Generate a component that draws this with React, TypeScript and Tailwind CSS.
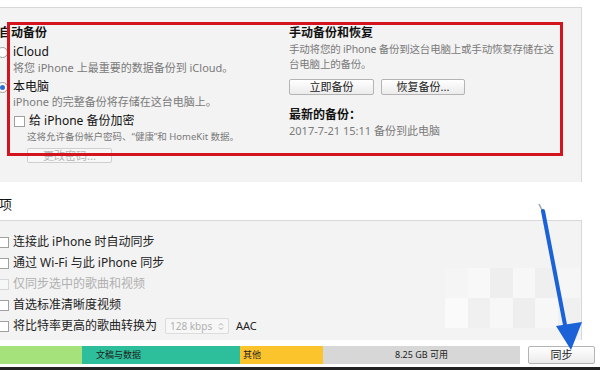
import React from 'react'

const font = { fontFamily: '"Noto Sans", "Noto Sans CJK SC", sans-serif' }

const Radio = ({ checked }: { checked?: boolean }) => (
    <span className="w-[11px] h-[11px] rounded-full border border-[#9a9a9a] bg-white flex items-center justify-center shrink-0">
        {checked && <span className="w-[5px] h-[5px] rounded-full bg-[#2b6fd6]" />}
    </span>
)

const Check = ({ disabled }: { disabled?: boolean }) => (
    <span className={`w-[11px] h-[11px] border shrink-0 ${disabled ? 'border-[#d6d6d6] bg-[#f7f7f7]' : 'border-[#a0a0a0] bg-white'}`} />
)

const Btn = ({ label, w }: { label: string; w: string }) => (
    <div className={`${w} h-[16px] border border-[#b4b4b4] rounded-[2px] bg-gradient-to-b from-white to-[#ebebeb] text-[11px] leading-[14px] text-[#222] flex items-center justify-center`}>
        {label}
    </div>
)

const OptionRow = ({ label, disabled, children }: { label: string; disabled?: boolean; children?: React.ReactNode }) => (
    <div className="h-[16px] flex items-center gap-[4px] whitespace-nowrap">
        <Check disabled={disabled} />
        <span className={`text-[12px] leading-[16px] ${disabled ? 'text-[#b0b0b0]' : 'text-[#222]'}`}>{label}</span>
        {children}
    </div>
)

export default function App() {
    return (
        <div className="w-[600px] h-[370px] bg-white relative overflow-hidden" style={font}>
            <div className="h-[7px]" />

            {/* backup panel */}
            <div className="h-[175px] w-[582px] bg-[#f3f3f3] border-t border-r border-[#d8d8d8] flex pt-[17px]">
                <div className="w-[290px] ml-[-1px] flex flex-col whitespace-nowrap">
                    <div className="h-[16px] text-[12px] leading-[16px] font-bold text-[#111]">自动备份</div>
                    <div className="h-[16px] mt-[3px] ml-[-2px] flex items-center gap-[5px]">
                        <Radio />
                        <span className="text-[12px] leading-[16px] text-[#111]">iCloud</span>
                    </div>
                    <div className="h-[14px] mt-[1px] ml-[14px] text-[11px] leading-[14px] text-[#7a7a7a]">将您 iPhone 上最重要的数据备份到 iCloud。</div>
                    <div className="h-[16px] mt-[4px] ml-[-2px] flex items-center gap-[5px]">
                        <Radio checked />
                        <span className="text-[12px] leading-[16px] text-[#111]">本电脑</span>
                    </div>
                    <div className="h-[14px] ml-[14px] text-[11px] leading-[14px] text-[#7a7a7a]">iPhone 的完整备份将存储在这台电脑上。</div>
                    <div className="h-[16px] mt-[4px] ml-[15px] flex items-center gap-[4px]">
                        <Check />
                        <span className="text-[12px] leading-[16px] text-[#111]">给 iPhone 备份加密</span>
                    </div>
                    <div className="h-[12px] mt-[2px] ml-[28px] text-[9.5px] leading-[12px] text-[#7a7a7a]">这将允许备份帐户密码、“健康”和 HomeKit 数据。</div>
                    <div className="mt-[5px] ml-[28px] w-[85px] h-[15px] border border-[#cfcfcf] rounded-[2px] bg-[#f7f7f7] text-[11px] leading-[13px] text-[#b5b5b5] text-center">更改密码...</div>
                </div>
                <div className="flex flex-col whitespace-nowrap">
                    <div className="h-[16px] text-[12px] leading-[16px] font-bold text-[#111]">手动备份和恢复</div>
                    <div className="text-[10.5px] leading-[15px] text-[#7a7a7a] mt-[1px] tracking-[-0.2px]">
                        手动将您的 iPhone 备份到这台电脑上或手动恢复存储在这<br />台电脑上的备份。
                    </div>
                    <div className="flex gap-[7px] mt-[7px]">
                        <Btn label="立即备份" w="w-[85px]" />
                        <Btn label="恢复备份..." w="w-[84px]" />
                    </div>
                    <div className="h-[16px] mt-[12px] text-[12px] leading-[16px] font-bold text-[#111]">最新的备份：</div>
                    <div className="h-[14px] mt-[1px] text-[11px] leading-[14px] text-[#7a7a7a]">2017-7-21 15:11 备份到此电脑</div>
                </div>
            </div>

            {/* options heading */}
            <div className="h-[38px] flex items-center pt-[8px] text-[13px] text-[#111] ml-[-1px]">项</div>

            {/* options panel */}
            <div className="h-[120px] w-[584px] bg-[#f3f3f3] border-t border-r border-[#d8d8d8] flex flex-col gap-[5px] pt-[13px] ml-[-2px]">
                <OptionRow label="连接此 iPhone 时自动同步" />
                <OptionRow label="通过 Wi-Fi 与此 iPhone 同步" />
                <OptionRow label="仅同步选中的歌曲和视频" disabled />
                <OptionRow label="首选标准清晰度视频" />
                <OptionRow label="将比特率更高的歌曲转换为">
                    <div className="ml-[4px] w-[64px] h-[16px] border border-[#dcdcdc] bg-[#f7f7f7] rounded-[2px] flex items-center justify-between px-[4px] text-[10px] leading-[14px] text-[#b0b0b0]">
                        <span>128 kbps</span>
                        <svg width="6" height="9" viewBox="0 0 6 9" fill="none" stroke="#a8a8a8" strokeWidth="1">
                            <path d="M1 3.5 L3 1.5 L5 3.5" />
                            <path d="M1 5.5 L3 7.5 L5 5.5" />
                        </svg>
                    </div>
                    <span className="ml-[3px] text-[11px] text-[#222]">AAC</span>
                </OptionRow>
            </div>

            {/* storage bar */}
            <div className="h-[27px] flex items-start pt-[6px]">
                <div className="flex h-[18px] w-[520px] text-[9px] leading-[18px] text-[#222] whitespace-nowrap">
                    <div className="w-[82px] bg-[#a5e27b]" />
                    <div className="w-[158px] bg-[#2dbe9b] pl-[14px]">文稿与数据</div>
                    <div className="w-[83px] bg-[#fbc42c] pl-[3px]">其他</div>
                    <div className="flex-1 bg-[#d7d7d7] text-center">8.25 GB 可用</div>
                </div>
                <div className="ml-[8px] w-[67px] h-[18px] border border-[#b4b4b4] rounded-[2px] bg-gradient-to-b from-white to-[#ebebeb] text-[11px] leading-[16px] text-center text-[#222]">同步</div>
            </div>
            <div className="h-[3px] bg-[#222]" />

            {/* watermark blur */}
            <div className="absolute left-[445px] top-[268px] w-[135px] h-[60px] grid grid-cols-6 opacity-70 pointer-events-none">
                <div className="bg-[#f6f6f6]" />
                <div className="bg-[#fbfbfb]" />
                <div className="bg-[#ededed]" />
                <div className="bg-[#fafafa]" />
                <div className="bg-[#eeeeee]" />
                <div className="bg-[#f8f8f8]" />
                <div className="bg-[#fdfdfd]" />
                <div className="bg-[#efefef]" />
                <div className="bg-[#fafafa]" />
                <div className="bg-[#ececec]" />
                <div className="bg-[#f9f9f9]" />
                <div className="bg-[#f0f0f0]" />
            </div>

            {/* red annotation box */}
            <div className="absolute left-[7px] top-[22px] w-[556px] h-[134px] border-[3px] border-[#d3141e] pointer-events-none" />

            {/* blue arrow */}
            <svg className="absolute left-0 top-0 pointer-events-none" width="600" height="370">
                <line x1="539" y1="204" x2="543" y2="212" stroke="#9aa4b5" strokeWidth="1.5" />
                <line x1="543" y1="211" x2="566" y2="330" stroke="#1b62d8" strokeWidth="4" strokeLinecap="round" />
                <polygon points="556,326 582,322 571,350" fill="#1b62d8" />
            </svg>
        </div>
    )
}
